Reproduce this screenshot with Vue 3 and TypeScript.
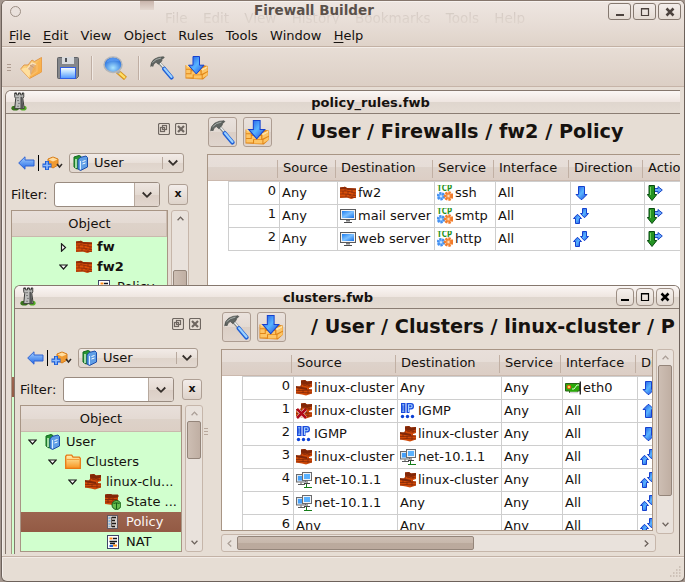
<script setup lang="ts">
interface MenuEntry { label: string; accel: boolean }
interface Cell { text?: string; icon?: string }
interface TreeRow { level: number; text: string; icon?: string; open?: boolean; closed?: boolean; bold?: boolean; selected?: boolean }
interface Doc {
  id: string
  title: string
  path: string
  active: boolean
  columns: string[]
  rows: Cell[][]
  tree: TreeRow[]
}

const menus: MenuEntry[] = [
  { label: 'File', accel: true },
  { label: 'Edit', accel: true },
  { label: 'View', accel: false },
  { label: 'Object', accel: false },
  { label: 'Rules', accel: false },
  { label: 'Tools', accel: false },
  { label: 'Window', accel: false },
  { label: 'Help', accel: true },
]
const ghosts: string[] = ['File', 'Edit', 'View', 'History', 'Bookmarks', 'Tools', 'Help']

const any: Cell = { text: 'Any' }
const all: Cell = { text: 'All' }
const cluster: Cell = { text: 'linux-cluster', icon: 'cluster' }
const igmp: Cell = { text: 'IGMP', icon: 'ip' }
const net: Cell = { text: 'net-10.1.1', icon: 'net' }

const docs: Doc[] = [
  {
    id: 'policy',
    title: 'policy_rules.fwb',
    path: '/ User / Firewalls / fw2 / Policy',
    active: false,
    columns: ['Source', 'Destination', 'Service', 'Interface', 'Direction', 'Action'],
    rows: [
      [any, { text: 'fw2', icon: 'bricks' }, { text: 'ssh', icon: 'tcp' }, all, { icon: 'down' }, { icon: 'branch' }],
      [any, { text: 'mail server', icon: 'host' }, { text: 'smtp', icon: 'tcp' }, all, { icon: 'both' }, { icon: 'branch' }],
      [any, { text: 'web server', icon: 'host' }, { text: 'http', icon: 'tcp' }, all, { icon: 'both' }, { icon: 'branch' }],
    ],
    tree: [
      { level: 2, text: 'fw', icon: 'bricks', closed: true, bold: true },
      { level: 2, text: 'fw2', icon: 'bricks', open: true, bold: true },
      { level: 3, text: 'Policy', icon: 'nat' },
      { level: 3, text: '' },
      { level: 3, text: '' },
      { level: 3, text: '' },
      { level: 3, text: '' },
      { level: 3, text: '', selected: true },
    ],
  },
  {
    id: 'clusters',
    title: 'clusters.fwb',
    path: '/ User / Clusters / linux-cluster / Policy',
    active: true,
    columns: ['Source', 'Destination', 'Service', 'Interface', 'Direction'],
    rows: [
      [cluster, any, any, { text: 'eth0', icon: 'nic' }, { icon: 'down' }],
      [{ text: 'linux-cluster', icon: 'clusterx' }, igmp, any, all, { icon: 'up' }],
      [igmp, cluster, any, all, { icon: 'down' }],
      [cluster, net, any, all, { icon: 'both' }],
      [net, cluster, any, all, { icon: 'both' }],
      [net, any, any, all, { icon: 'both' }],
      [any, any, any, all, { icon: 'both' }],
    ],
    tree: [
      { level: 0, text: 'User', icon: 'books', open: true },
      { level: 1, text: 'Clusters', icon: 'folder', open: true },
      { level: 2, text: 'linux-clu...', icon: 'cluster', open: true },
      { level: 3, text: 'State ...', icon: 'state' },
      { level: 3, text: 'Policy', icon: 'policy', selected: true },
      { level: 3, text: 'NAT', icon: 'nat' },
    ],
  },
]
</script>

<template>
  <svg class="defs" width="0" height="0">
    <defs>
      <linearGradient id="gBlue" x1="0" y1="0" x2="1" y2="1"><stop offset="0" stop-color="#1b4fe0" /><stop offset=".5" stop-color="#58b4ff" /><stop offset="1" stop-color="#1747dc" /></linearGradient>
      <linearGradient id="gBack" x1="0" y1="0" x2="0" y2="1"><stop offset="0" stop-color="#a9d4ff" /><stop offset="1" stop-color="#1f66e6" /></linearGradient>
      <linearGradient id="gGold" x1="0" y1="0" x2="1" y2="1"><stop offset="0" stop-color="#ffe9a8" /><stop offset="1" stop-color="#f0981c" /></linearGradient>
      <linearGradient id="gFolder" x1="0" y1="0" x2="0" y2="1"><stop offset="0" stop-color="#fff3b0" /><stop offset="1" stop-color="#f79420" /></linearGradient>
      <linearGradient id="gScreen" x1="0" y1="0" x2="1" y2="1"><stop offset="0" stop-color="#1d7df0" /><stop offset=".5" stop-color="#7cc0ff" /><stop offset="1" stop-color="#1470e8" /></linearGradient>
      <linearGradient id="gDisk" x1="0" y1="0" x2="0" y2="1"><stop offset="0" stop-color="#ffffff" /><stop offset=".4" stop-color="#b9dcff" /><stop offset="1" stop-color="#4f96ff" /></linearGradient>
      <radialGradient id="gLens" cx=".5" cy=".7" r=".65"><stop offset="0" stop-color="#a8e4ff" /><stop offset="1" stop-color="#1a62da" /></radialGradient>
    </defs>
    <symbol id="i-open" viewBox="0 0 24 24">
      <path d="M.7 13L4 9h4l4-5 2.500 1.500L21.500 1.500V16L9.500 22.500z" fill="url(#gGold)" stroke="#e0964a" />
      <path d="M6 14l6-7 5 2v6.500l-6 4z" fill="#d9b28c" stroke="#fbe3bd" stroke-width="1.200" />
      <path d="M10 9l5 3.500-4 6" fill="none" stroke="#c9976a" />
      <path d="M1 13l5-1.500 4 3-.5 8z" fill="#ffdf9e" /><path d="M21.500 1.500L13 12l-3.500 10L21.500 16z" fill="#f9b24d" opacity=".75" />
    </symbol>
    <symbol id="i-save" viewBox="0 0 24 24">
      <path d="M2.500 1.500h19q1 0 1 1v18l-2 2h-18q-1 0-1-1v-19q0-1 1-1z" fill="#85878b" stroke="#606266" />
      <rect x="6" y="1" width="12" height="7" fill="#d9dadc" /><rect x="9" y="2" width="2" height="4" fill="#505257" />
      <rect x="4.500" y="11.500" width="15" height="11" fill="url(#gDisk)" stroke="#315fe5" />
    </symbol>
    <symbol id="i-find" viewBox="0 0 24 24">
      <path d="M14.500 15.500l8 7" stroke="#d9951f" stroke-width="4.500" /><path d="M15.500 16.200l6.500 5.600" stroke="#ffe067" stroke-width="2.200" /><path d="M14 14.500l2.500 2.500" stroke="#a9a8a6" stroke-width="3.500" />
      <ellipse cx="10" cy="8.700" rx="9" ry="7.700" fill="url(#gLens)" stroke="#b3b6ba" stroke-width="1.500" />
      <path d="M3.200 6.500q2-4.700 6.800-4.700t6.500 3.700q-6.500-2-13.300 1z" fill="#5d9cf2" opacity=".8" />
    </symbol>
    <symbol id="i-hammer" viewBox="0 0 24 24">
      <path d="M9 6.500l5.500 6" stroke="#858a88" stroke-width="3" /><path d="M9.700 6.800l5 5.400" stroke="#eef0f0" stroke-width="1.300" />
      <path d="M14.200 12.800l7.300 8.700" stroke="#2260d6" stroke-width="4.200" stroke-linecap="round" /><path d="M14.500 12.600l7 8.300" stroke="#9bd2ff" stroke-width="2.200" stroke-linecap="round" />
      <path d="M.7 10.500Q.5 6 4.500 3 8 .8 13.500.7L14.300 1.500 12.500 3 11.500 3.500 12 4.800 8.500 8.300 6 6.300Q3.500 7.300 2.800 10.500L2 9.500z" fill="#606562" stroke="#414643" stroke-width=".6" />
      <path d="M2.500 6.500q3-3.700 8.500-4.500" fill="none" stroke="#adb3b0" stroke-width=".9" />
    </symbol>
    <symbol id="i-install" viewBox="0 0 24 24">
      <path d="M.5 9h5.500l1 2h9l1-2 6 1v9l-5 4.500-17.500-1z" fill="#e08618" /><path d="M1.200 9.700h5.300v3H1.200zM7.500 11.500h8v3h-8zM1.200 13.700h4.300v3.500H1.200zM6.500 15.300h9v3.200h-9zM1.200 18.200h6.500v3.300H1.200zM8.700 19.300h8v3.200h-8zM16.700 15l6-3v3l-6 3zM17.700 19l5-3v3l-5 3.300z" fill="#fdc566" />
      <path d="M.5 9H6l2 2H3zM16 13l6.500-3v2l-5.500 3z" fill="#ffe2a0" />
      <path d="M8 .5h6.500v8.700H19L11.300 18 3.500 9.200H8z" fill="url(#gBlue)" stroke="#1640ce" />
    </symbol>
    <symbol id="i-tower" viewBox="0 0 16 20">
      <ellipse cx="4" cy="17" rx="4" ry="2.500" fill="#38731b" /><ellipse cx="12.500" cy="17" rx="3.500" ry="2.500" fill="#55ae27" />
      <path d="M3.500 17.500l1-10.500-1-2v-4h2v2h2v-2h2v2h2v-2h1.500v4l-1 2 1.500 10.500z" fill="#bdbdbb" stroke="#373735" />
      <path d="M9.500 5l2 0 1 12H9.500z" fill="#555" /><path d="M6 9h2M7 12h2M6 15h2M5 6h3" stroke="#777" />
      <path d="M4 1.500h1M7.500 1.500h1M11 1.500h1" stroke="#222" />
    </symbol>
    <symbol id="i-bricks" viewBox="0 0 16 16">
      <path d="M0 2.500l5-.7 2 1.200 9 .5v9l-5 1.500-4-1.500-7 .5z" fill="#d94f08" />
      <path d="M0 2.500l5-.7 2 1.200 9 .5v1.800l-8-.3-3-1-5 .6z" fill="#8d2c08" />
      <path d="M0 6h7l9 2M0 9h6l10 1.700M0 12h7l9 .6M5 3v3M3 6v3M8 6v3.500M12 5v3M10 9v2M6 9v3M14 8v3M12 11v2.500" fill="none" stroke="#8b2b0b" stroke-width=".8" />
    </symbol>
    <symbol id="i-cluster" viewBox="0 0 16 16">
      <path d="M5 .5l4-.5 2 1.500 5-.5v6l-3 1v1l3 .5v4l-6 2-4-1-6-1V7l5-1z" fill="#cf4908" />
      <path d="M5 .5l4-.5 2 1.500 5-.5v2.500l-5 1.500-6-1.500zM0 6l6 1 5 1v2L5 9 0 8z" fill="#812708" />
      <path d="M5 4l6 2 5-1M0 10.500h6l10-.5M0 13l6-.5 10 .5M8 2v4M13 3v4M3 8v3M7 10v3M12 9v5M5 5v2" fill="none" stroke="#872908" stroke-width=".8" />
    </symbol>
    <symbol id="i-clusterx" viewBox="0 0 16 16">
      <use href="#i-cluster" /><path d="M1.500 6.500l8 8.500M9.500 6.500l-8 8.500" stroke="#f4e8e2" stroke-width="4" /><path d="M1 6l9 9M10 6l-9 9" stroke="#b00818" stroke-width="2.500" />
    </symbol>
    <symbol id="i-state" viewBox="0 0 16 16">
      <path d="M0 1l5-1 2 1 6 0v7l-5 3-8-1z" fill="#cf4908" /><path d="M0 1l5-1 2 1 6 0v2L5 4 0 3zM0 5.500h12M0 8h10M4 3v3M8 4v3M3 6v3" fill="#812708" stroke="#872908" />
      <circle cx="11.500" cy="11" r="4.500" fill="#66bd4d" stroke="#145c17" /><path d="M8.500 9.500q3-1.500 6 0M11.500 9v6" stroke="#145c17" fill="none" />
    </symbol>
    <symbol id="i-folder" viewBox="0 0 16 16">
      <path d="M.7 14.300V2.200l1-1h5l1.300 2h6.300l1 1v10.100z" fill="url(#gFolder)" stroke="#e87813" stroke-width="1.300" /><path d="M1.500 5.500h13" stroke="#f3a03c" />
    </symbol>
    <symbol id="i-books" viewBox="0 0 16 16">
      <path d="M1 2l5-1.500 2 1v11L4 14l-3-2z" fill="#279332" stroke="#126b21" /><path d="M3 4v9" stroke="#cdf4cc" stroke-width="1.500" />
      <path d="M5 5l2-2.500 6-1.500 1.500 1.500v9.500L7.500 15.500 5 14z" fill="#5f9ee6" stroke="#1d4ca9" /><path d="M7.500 6v8.500" stroke="#d9eeff" /><path d="M9.500 6.500l3-1M9.500 9l3-1" stroke="#fff" />
    </symbol>
    <symbol id="i-policy" viewBox="0 0 16 16">
      <rect x="2.500" y="1.500" width="10" height="13" fill="#d7d1cc" stroke="#615a62" /><path d="M4.500 3v10" stroke="#8db7de" stroke-width="2" stroke-dasharray="2 1" /><path d="M7 3.500h4M7 6.500h3M7 9.500h4M7 12.500h3" stroke="#1c1917" stroke-width="1.500" /><path d="M6.500 3v10" stroke="#6c625c" />
    </symbol>
    <symbol id="i-nat" viewBox="0 0 16 16">
      <rect x="2.500" y="1.500" width="11" height="13" fill="#fff" stroke="#3f4468" /><path d="M4.500 4.500h3M8 11.500h4" stroke="#ff8b16" stroke-width="2" /><path d="M8 4.500h4M4.500 7.500h7.500M5 9.500h5" stroke="#10141c" stroke-width="1.300" /><path d="M4.500 12h3.500" stroke="#1e60d8" stroke-width="2" />
    </symbol>
    <symbol id="i-host" viewBox="0 0 16 16">
      <rect x=".5" y="1.500" width="15" height="10" fill="#f3f3f3" stroke="#5a5a5c" /><rect x="2" y="3" width="12" height="7" fill="url(#gScreen)" /><path d="M6 12h4v1.500H6z" fill="#77787a" /><path d="M4 14.500h8" stroke="#4b4b4d" />
    </symbol>
    <symbol id="i-net" viewBox="0 0 16 16">
      <path d="M8 15.500h8M10.500 12v4" stroke="#147d18" /><rect x=".5" y="2.500" width="9" height="7.500" fill="#d9e6f2" stroke="#6b6b6d" /><rect x="2" y="4" width="6" height="4.500" fill="#45a0fa" /><path d="M2 12.500h7M5 10.500v2" stroke="#5a5a5c" />
      <rect x="6.500" y=".5" width="9" height="8" fill="#f1f4f7" stroke="#6b6b6d" /><rect x="8" y="2" width="6" height="5" fill="#5ab2ff" /><path d="M11 9v2M8 11.500h6" stroke="#454547" />
    </symbol>
    <symbol id="i-ip" viewBox="0 0 16 16">
      <path d="M1 0h4.500v10H1zM6.500 0H11q3 0 3 3.300T11 6.500H9.500V10h-3z" fill="#1b4bdc" /><path d="M2.200 1.200h2v1h-.7v5.500h.7v1h-2v-1h.6V2.200h-.6zM8 1.200h3q1.700 0 1.700 2T11 5.300H9V9H8zm1.200 1v2h1.500q.8 0 .8-1t-.8-1z" fill="#a5d2ff" fill-rule="evenodd" />
      <circle cx="2.500" cy="13.500" r="1.700" fill="#0b3fd5" /><circle cx="7.500" cy="13.500" r="1.700" fill="#0b3fd5" /><circle cx="12.500" cy="13.500" r="1.700" fill="#0b3fd5" />
    </symbol>
    <symbol id="i-tcp" viewBox="0 0 16 16">
      <circle cx="4" cy="11.200" r="3" fill="#7db9fb" stroke="#4390f2" stroke-width="2.500" stroke-dasharray="2.200 .8" /><circle cx="11.500" cy="11" r="3.300" fill="#f9a866" stroke="#f27c2b" stroke-width="3" stroke-dasharray="2.200 .8" /><circle cx="11.500" cy="11" r="1" fill="#ffe0c4" /><circle cx="4" cy="11.200" r="1" fill="#d6e9ff" />
      <text x="0" y="6.300" class="tcp" textLength="15" lengthAdjust="spacingAndGlyphs">TCP</text>
    </symbol>
    <symbol id="i-nic" viewBox="0 0 16 16">
      <path d="M.5 3.500h14v7.500h-2v1.500h-8V11h-4z" fill="#28a908" stroke="#2b6218" /><path d="M5 12.500h8" stroke="#d3d3d3" stroke-width="1.500" /><circle cx="4" cy="7" r="1.800" fill="#ffdb4a" stroke="#f14d16" /><path d="M7 9h2l3-4h2" stroke="#d8ffd0" fill="none" /><path d="M15.300 1.500v13" stroke="#29292b" stroke-width="1.400" />
    </symbol>
    <symbol id="i-down" viewBox="0 0 16 16"><path d="M5.500 1.500h6v8h2.500L9 14.500H8L3 9.500h2.500z" fill="url(#gBlue)" stroke="#1640ce" /></symbol>
    <symbol id="i-up" viewBox="0 0 16 16"><path d="M5.500 14.500h6v-8h2.500L9 1.500H8L3 6.500h2.500z" fill="url(#gBlue)" stroke="#1640ce" /></symbol>
    <symbol id="i-both" viewBox="0 0 16 16">
      <path d="M2.500 15.500h4v-5h2L4.800 6.500h-.6L.5 10.500h2z" fill="url(#gBlue)" stroke="#1640ce" /><path d="M9.500.5h4v5h2L11.800 9.500h-.6L7.500 5.500h2z" fill="url(#gBlue)" stroke="#1640ce" />
    </symbol>
    <symbol id="i-branch" viewBox="0 0 16 16">
      <path d="M7 3.500h4V1.500l4.300 3.500L11 8.700V6.500H7z" fill="#69aafa" stroke="#1947c8" /><path d="M2 .5h5.500v9h2.300L5 15.500.3 9.500H2z" fill="#259323" stroke="#084b10" /><path d="M3.500 2v8" stroke="#6fd25f" />
    </symbol>
    <symbol id="i-back" viewBox="0 0 17 16"><path d="M.7 8L7 1.800V5h9v6H7v3.200z" fill="url(#gBack)" stroke="#2e62d3" /></symbol>
    <symbol id="i-new" viewBox="0 0 21 16">
      <path d="M6 4l5-2 5 2v6l-5 3-5-3z" fill="#f09a30" stroke="#d67c18" /><path d="M6.500 4.500l4.500-2 4.500 2-4.500 2z" fill="#ffdda0" />
      <path d="M5 6v9M.5 10.500h9" stroke="#1f5ed6" stroke-width="4" /><path d="M5 6.700v7.600M1.200 10.500h7.600" stroke="#8ebcfd" stroke-width="1.600" /><path d="M15 9l2.500 3L20 9" fill="none" stroke="#332d29" stroke-width="1.500" />
    </symbol>
    <symbol id="i-chev" viewBox="0 0 10 8"><path d="M.7 1.500L5 5.800l4.300-4.300" fill="none" stroke="#352f2b" stroke-width="1.800" /></symbol>
    <symbol id="i-thin" viewBox="0 0 6 4"><path d="M.5 3.500L3 .8l2.500 2.700" fill="none" stroke="currentColor" stroke-width="1.100" /></symbol>
    <symbol id="i-min" viewBox="0 0 10 10"><path d="M1 8h8" stroke="currentColor" stroke-width="2" /></symbol>
    <symbol id="i-max" viewBox="0 0 10 10"><path d="M1.500 1.500h7v7h-7zM1 2h8" fill="none" stroke="currentColor" stroke-width="1.200" /></symbol>
    <symbol id="i-x" viewBox="0 0 10 10"><path d="M1.500 1.500l7 7M8.500 1.500l-7 7" stroke="currentColor" stroke-width="2.500" /></symbol>
  </svg>

  <div class="desktop">
    <div class="window">
      <header class="titlebar">
        <span class="orb"></span>
        <div class="ghost"><span v-for="g in ghosts" :key="g">{{ g }}</span></div>
        <span class="smudge"></span>
        <h1>Firewall Builder</h1>
        <div class="wbtns">
          <button><svg><use href="#i-min" /></svg></button>
          <button><svg><use href="#i-max" /></svg></button>
          <button><svg><use href="#i-x" /></svg></button>
        </div>
      </header>
      <nav class="menubar">
        <span v-for="m in menus" :key="m.label"><u v-if="m.accel">{{ m.label[0] }}</u><template v-else>{{ m.label[0] }}</template>{{ m.label.slice(1) }}</span>
      </nav>
      <div class="toolbar">
        <i class="grip"></i>
        <svg class="tool open"><use href="#i-open" /></svg>
        <svg class="tool save"><use href="#i-save" /></svg>
        <i class="tsep"></i>
        <svg class="tool"><use href="#i-find" /></svg>
        <i class="tsep"></i>
        <svg class="tool"><use href="#i-hammer" /></svg>
        <svg class="tool install"><use href="#i-install" /></svg>
      </div>

      <main class="mdi">
        <section v-for="d in docs" :key="d.id" class="doc" :class="[d.id, { active: d.active }]">
          <div class="doc-title">
            <svg class="tower"><use href="#i-tower" /></svg>
            <b>{{ d.title }}</b>
            <div v-if="d.active" class="dbtns">
              <button><svg><use href="#i-min" /></svg></button>
              <button><svg><use href="#i-max" /></svg></button>
              <button><svg><use href="#i-x" /></svg></button>
            </div>
          </div>
          <div class="doc-body">
            <aside class="side">
              <div class="dock">
                <svg viewBox="0 0 12 12"><rect x=".5" y=".5" width="11" height="11" rx="1.500" /><rect x="4.500" y="2.500" width="4" height="4" /><rect x="2.500" y="4.500" width="4" height="4" /></svg>
                <svg viewBox="0 0 12 12"><rect x=".5" y=".5" width="11" height="11" rx="1.500" /><path d="M3 3l6 6M9 3l-6 6" stroke-width="2.200" /></svg>
              </div>
              <div class="lib">
                <svg class="back"><use href="#i-back" /></svg>
                <i class="bar"></i>
                <svg class="new"><use href="#i-new" /></svg>
                <div class="combo">
                  <svg class="ic"><use href="#i-books" /></svg>
                  <span>User</span>
                  <i></i>
                  <svg class="chev"><use href="#i-chev" /></svg>
                </div>
              </div>
              <div class="filter">
                <label>Filter:</label>
                <div class="field"><i></i><em><svg class="chev"><use href="#i-chev" /></svg></em></div>
                <button>x</button>
              </div>
              <div class="treewrap">
                <div class="tree">
                  <div class="thead">Object</div>
                  <div v-for="(r, i) in d.tree" :key="i" class="trow" :class="[{ selected: r.selected, bold: r.bold }, 'l' + r.level]">
                    <span class="exp">
                      <svg v-if="r.open" width="9" height="7" viewBox="0 0 9 7"><path d="M.8 1h7.400L4.500 5z" /></svg>
                      <svg v-if="r.closed" width="7" height="9" viewBox="0 0 7 9"><path d="M1.500 .8v7.400L5.500 4.500z" /></svg>
                    </span>
                    <svg class="ic"><use v-if="r.icon" :href="'#i-' + r.icon" /></svg>
                    <span>{{ r.text }}</span>
                  </div>
                </div>
                <div class="vscroll tscroll">
                  <svg class="arrow"><use href="#i-thin" /></svg>
                  <i class="thumb"></i>
                  <svg class="arrow down"><use href="#i-thin" /></svg>
                </div>
              </div>
            </aside>
            <div class="split"><i></i></div>
            <div class="rules">
              <div class="crumbs">
                <button><svg><use href="#i-hammer" /></svg></button>
                <button><svg><use href="#i-install" /></svg></button>
                <h2>{{ d.path }}</h2>
              </div>
              <div class="gridarea">
                <div class="table">
                  <div class="hrow">
                    <span class="first"></span>
                    <span v-for="c in d.columns" :key="c">{{ c }}</span>
                  </div>
                  <div v-for="(r, i) in d.rows" :key="i" class="row">
                    <span class="num">{{ i }}</span>
                    <span v-for="(c, j) in r" :key="j" class="cell">
                      <svg v-if="c.icon" class="ic" :class="c.icon"><use :href="'#i-' + c.icon" /></svg>{{ c.text }}
                    </span>
                  </div>
                </div>
                <div class="vscroll gscroll">
                  <svg class="arrow faint"><use href="#i-thin" /></svg>
                  <i class="thumb"></i>
                  <svg class="arrow down"><use href="#i-thin" /></svg>
                </div>
              </div>
              <div class="hscroll">
                <svg class="arrow left faint"><use href="#i-thin" /></svg>
                <i class="thumb"></i>
                <svg class="arrow right"><use href="#i-thin" /></svg>
              </div>
            </div>
          </div>
        </section>
      </main>
      <footer class="status">
        <svg width="11" height="11" viewBox="0 0 11 11"><path d="M9 1h2M6 4h5M3 7h8M0 10h11" stroke="#b5a69b" stroke-dasharray="1.500 1.500" /></svg>
      </footer>
    </div>
  </div>
</template>

<style>
body { margin: 0; overflow: hidden; background: #6f655f; }
</style>

<style scoped>
.defs { position: absolute; }
.tcp { font: bold 8px "DejaVu Sans", sans-serif; fill: #1f9220; }
.desktop { width: 685px; height: 582px; box-sizing: border-box; background: #a3968e; font: 13px/16px "DejaVu Sans", sans-serif; color: #16120f; }
.window { width: 684px; margin-left: 1px; height: 582px; box-sizing: border-box; border: 1px solid #6d625b; border-top-color: #85766c; border-radius: 6px; background: #e6ddd4; box-shadow: inset 1px 1px 0 #f5efeb; display: flex; flex-direction: column; overflow: hidden; }
button { padding: 0; margin: 0; font: inherit; color: inherit; box-sizing: border-box; display: flex; align-items: center; justify-content: center; }
svg { display: block; flex: none; }
i { display: block; flex: none; }

.titlebar { position: relative; height: 23px; flex: none; display: flex; background: linear-gradient(#eee6e1, #e7ddd6); box-shadow: inset 0 1px 0 #f7f2ef; }
.titlebar h1 { position: relative; margin: 1px 0 0 233px; font-size: 13.500px; line-height: 17px; color: #5a514b; font-weight: bold; white-space: nowrap; }
.orb { box-sizing: border-box; width: 11px; height: 11px; margin: 5px 0 0 8px; border: 1.500px solid #9c8f85; border-radius: 50%; background: #e9e1dc; }
.ghost { position: absolute; left: 163px; top: 8px; height: 15px; overflow: hidden; display: flex; gap: 15.300px; color: rgba(90, 70, 60, .17); font-size: 13.500px; line-height: 18px; -webkit-mask-image: linear-gradient(#000, rgba(0, 0, 0, .3)); mask-image: linear-gradient(#000, rgba(0, 0, 0, .3)); }
.smudge { position: absolute; left: 138px; top: 0; width: 14px; height: 9px; background: linear-gradient(#c9b5ac, #e4d8d0); }
.wbtns { margin-left: auto; display: flex; gap: 2px; padding: 2px 3px 0 0; }
.wbtns button { width: 23px; height: 17px; border: 1px solid #857970; border-radius: 3px; background: linear-gradient(#f3edea, #e4dbd3); color: #4b423d; }
.wbtns svg { width: 10px; height: 10px; }

.menubar { height: 23px; flex: none; display: flex; gap: 12.300px; padding: 4px 0 0 7px; box-sizing: border-box; background: linear-gradient(#e7ddd6, #dfd3c9); border-bottom: 1px solid #c3b1a4; }
.menubar u { text-underline-offset: 2px; }
.toolbar { height: 40px; flex: none; box-sizing: border-box; display: flex; align-items: center; padding: 1px 0 0 5px; background: linear-gradient(#e7ddd5, #dccfc5); border-top: 1px solid #f4eeea; border-bottom: 1px solid #c6b4a8; }
.grip { width: 4px; height: 8px; margin-right: 8px; background: repeating-linear-gradient(#ad9b8f 0 1px, transparent 1px 3px); }
.tool { width: 24px; height: 24px; }
.open { margin-left: 1px; }
.save { margin-left: 12px; }
.install { margin-left: 11px; }
.tsep { width: 1px; height: 24px; background: #bfaea3; margin: 0 11px 0 11px; box-shadow: 1px 0 0 #f1eae5; }

.mdi { position: relative; height: 467px; flex: none; width: 678px; overflow: hidden; }
.doc { position: absolute; box-sizing: border-box; border: 1px solid #85776d; border-bottom: 0; border-radius: 6px 6px 0 0; background: #e6ddd4; overflow: hidden; }
.policy { left: 3px; top: 3px; width: 731px; height: 470px; }
.clusters { left: 12px; top: 198px; width: 666px; height: 270px; border-right-color: #6d625b; }
.doc-title { height: 22px; border-bottom: 1px solid #8a7d73; background: linear-gradient(#fbf7f5, #efe6e1 48%, #dfd6ce 52%, #e4dbd2); display: flex; align-items: flex-start; }
.doc-title b { flex: 1; text-align: center; line-height: 17px; padding: 3px 21px 0 0; }
.clusters .doc-title b { padding: 3px 0 0 4px; }
.tower { width: 16px; height: 19px; margin: 1px 0 0 5px; }
.dbtns { display: flex; gap: 2px; padding: 2px 5px 0 0; }
.dbtns button { width: 18px; height: 18px; border: 1px solid #9b8d83; border-radius: 4px; background: linear-gradient(#f6f1ee, #e2d9d1); color: #000; }
.dbtns svg { width: 10px; height: 10px; }

.doc-body { display: flex; padding-left: 5px; }
.side { width: 178px; flex: none; }
.clusters .side { width: 183px; }
.dock { display: flex; justify-content: flex-end; gap: 5px; padding: 9px 2px 0 0; height: 12px; }
.dock svg { width: 12px; height: 12px; fill: none; stroke: #6f6761; stroke-width: 1.200; }
.lib { margin-top: 18px; height: 20px; display: flex; align-items: center; padding: 0 5px 0 7px; }
.back { width: 17px; height: 16px; }
.bar { width: 1px; height: 16px; background: #000; margin-left: 3px; }
.new { width: 21px; height: 16px; margin: 0 6px 0 3px; }
.combo { flex: 1; height: 20px; box-sizing: border-box; border: 1px solid #aa9b8f; border-radius: 3px; background: linear-gradient(#f2ebe7, #e8dfd8 50%, #dfd4cb 50%, #e3d9d1); display: flex; align-items: center; }
.combo .ic { margin-left: 3px; }
.combo span { margin-left: 5px; flex: 1; }
.combo > i { width: 1px; height: 12px; background: #b8a99e; }
.combo .chev { margin: 0 5px; }
.ic { width: 16px; height: 16px; }
.chev { width: 10px; height: 8px; }
.filter { margin-top: 9px; height: 25px; display: flex; align-items: center; }
.filter label { width: 43px; }
.field { display: flex; flex: 1; height: 25px; box-sizing: border-box; border: 1px solid #998b80; border-radius: 3px; background: #fff; overflow: hidden; }
.field > i { flex: 1; }
.field em { width: 25px; box-sizing: border-box; border-left: 1px solid #b7a99e; background: linear-gradient(#eee6e1, #e4dad2 50%, #dbcec5 50%, #e1d6ce); display: flex; align-items: center; justify-content: center; }
.filter button { width: 20px; height: 21px; margin: 0 1px 0 8px; border: 1px solid #ae9f94; border-radius: 3px; background: linear-gradient(#f3edea, #ded3ca); font-size: 11px; font-weight: bold; padding-bottom: 1px; }
.treewrap { margin-top: 3px; display: flex; height: 147px; gap: 3px; }
.policy .treewrap { height: 360px; }
.tree { flex: 1; min-width: 0; box-sizing: border-box; border: 1px solid #a89585; background: #d1ffce; overflow: hidden; }
.thead { height: 25px; line-height: 25px; text-align: center; border-bottom: 1px solid #c9b9ad; background: linear-gradient(#e8dfda, #e4dad3 50%, #ddd2c9 50%, #dccfc5); box-shadow: inset -2px 0 0 -1px #cbbbb0; }
.trow { height: 20px; display: flex; align-items: center; white-space: nowrap; }
.trow.l0 { padding-left: 6px; }
.trow.l1 { padding-left: 26px; }
.trow.l2 { padding-left: 46px; }
.trow.l3 { padding-left: 66px; }
.trow .exp { width: 11px; margin-right: 7px; display: flex; justify-content: center; }
.trow .exp path { fill: #fff; stroke: #1b1b1b; stroke-width: 1.200; }
.trow .ic { margin-right: 5px; }
.trow.bold { font-weight: bold; }
.trow.selected { background: linear-gradient(#9c6550, #935a44); color: #fbf6f3; }
.vscroll { width: 18px; flex: none; box-sizing: border-box; border: 1px solid #c6b6aa; border-radius: 3px; background: #e9e2dc; display: flex; flex-direction: column; align-items: center; }
.arrow { width: 7px; height: 5px; color: #6b615b; margin: 5px 0; }
.faint { color: #ab9f97; }
.arrow.down { transform: rotate(180deg); margin-top: auto; margin-bottom: 6px; }
.thumb { box-sizing: border-box; width: 14px; border: 1px solid #94857a; border-radius: 2px; background: linear-gradient(90deg, #cdbeb3, #c0afa3); }
.tscroll .thumb { height: 38px; }
.clusters .tscroll .arrow:first-child { color: #ab9f97; }
.policy .tscroll .thumb { margin-top: 44px; }
.split { width: 18px; flex: none; padding-top: 119px; }
.policy .split i { visibility: hidden; }
.split i { width: 4px; height: 9px; margin-left: 1px; background: repeating-linear-gradient(#b8a79b 0 1px, transparent 1px 3px); }

.rules { flex: 1; min-width: 0; }
.crumbs { display: flex; align-items: center; padding: 3px 0 0 1px; height: 30px; white-space: nowrap; overflow: hidden; }
.crumbs button { flex: none; width: 29px; height: 30px; margin-right: 6px; border: 1px solid #ad9d92; border-radius: 3px; background: linear-gradient(#eae2dd, #e3dad3 50%, #dbcfc6 50%, #e0d5cd); }
.crumbs button svg { width: 25px; height: 25px; }
.crumbs h2 { margin: 0 0 0 19px; font-size: 19.250px; line-height: 24px; font-weight: bold; }
.clusters .crumbs { width: 453px; }
.gridarea { display: flex; margin-top: 7px; gap: 3px; }
.table { width: 520px; flex: none; box-sizing: border-box; border: 1px solid #a89585; background: #fff; overflow: hidden; height: 430px; }
.clusters .table { width: 432px; height: 182px; }
.row { display: grid; grid-template-columns: 51px 58px 97px 61px 75px 74px 80px; }
.clusters .row { grid-template-columns: 51px 104px 104px 61px 75px 75px; }
.hrow { display: grid; grid-template-columns: 70px 58px 97px 61px 75px 74px 80px; }
.clusters .hrow { grid-template-columns: 70px 104px 104px 61px 75px 75px; }
.hrow { height: 25px; width: 520px; border-bottom: 1px solid #cbb9ae; background: linear-gradient(#e8dfda, #e6ddd7 50%, #ddd2ca 50%, #dccec5); }
.hrow span { line-height: 26px; padding-left: 5px; background: linear-gradient(#c1b0a4, #c1b0a4) 100% 5px / 1px 18px no-repeat; }
.row { margin-left: 20px; height: 22px; border-bottom: 1px solid #cecece; }
.hrow + .row { border-top: 1px solid #cecece; }
.row > span { border-left: 1px solid #cecece; white-space: nowrap; }
.num { text-align: right; padding-right: 3px; line-height: 17px; }
.cell { display: flex; align-items: center; padding-left: 2px; line-height: 22px; min-width: 0; }
.cell .ic { margin-right: 2px; }
.gscroll { height: 185px; }
.policy .gscroll, .policy .hscroll { display: none; }
.gscroll .thumb { height: 131px; }
.hscroll { width: 435px; height: 18px; box-sizing: border-box; border: 1px solid #c6b6aa; border-radius: 3px; background: #e9e2dc; display: flex; align-items: center; }
.hscroll .thumb { width: 237px; height: 14px; background: linear-gradient(#cdbeb3, #c7b7ab 50%, #bbaa9d 50%, #bba99d); }
.hscroll .arrow { margin: 0 4px; }
.left { transform: rotate(-90deg); }
.hscroll .right { transform: rotate(90deg); margin-left: auto; margin-right: 5px; }
.status { margin-top: 2px; flex: 1; border-top: 1px solid #c3b2a6; box-shadow: inset 0 1px 0 #f3ece7; display: flex; justify-content: flex-end; align-items: flex-end; padding: 0 3px 4px 0; }
</style>
